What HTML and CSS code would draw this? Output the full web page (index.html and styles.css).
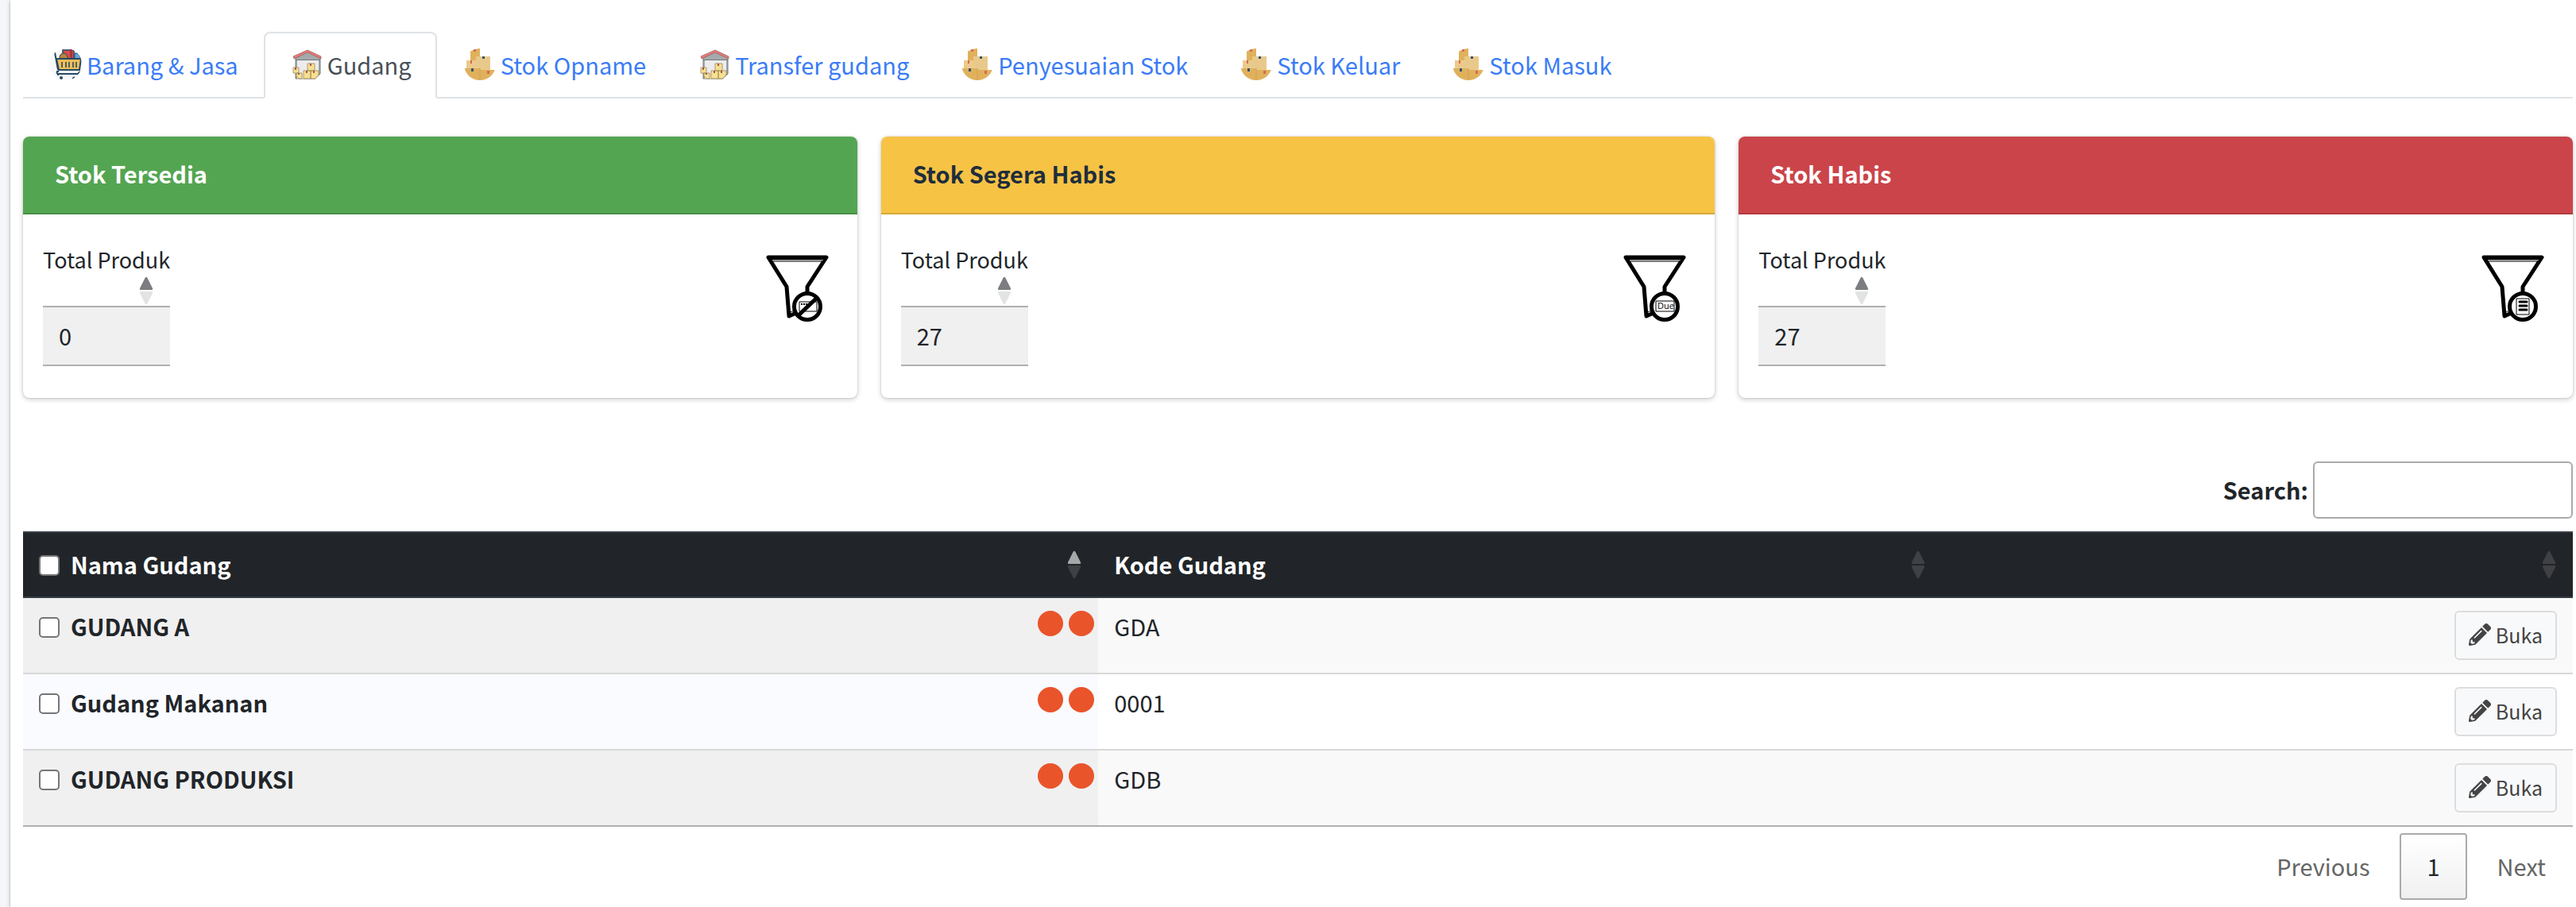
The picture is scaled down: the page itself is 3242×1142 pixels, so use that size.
FILE: index.html
```html
<!DOCTYPE html>
<html lang="id">
<head>
<meta charset="utf-8">
<meta name="viewport" content="width=device-width, initial-scale=1">
<title>Gudang</title>
<link rel="stylesheet" href="styles.css">
</head>
<body>
<svg class="defs" aria-hidden="true">
  <defs>
    <clipPath id="round"><circle cx="20" cy="20" r="20"/></clipPath>
    <symbol id="cart" viewBox="0 0 40 40">
      <g clip-path="url(#round)">
        <rect width="40" height="40" fill="#f8f8f8"/>
        <path d="M16 2h14v13H16z" fill="#dd4b4b" stroke="#244a64" stroke-width="1.5"/>
        <path d="M25 1h3v12h-3z" fill="#a93440"/>
        <path d="M31 6h4l4 7h-8z" fill="#62a8e0" stroke="#244a64"/>
        <circle cx="17" cy="11" r="5" fill="#b9823c" stroke="#244a64"/>
        <path d="M8 13h31l-2 14H11z" fill="#f3bd58" stroke="#244a64" stroke-width="2"/>
        <path d="M15 17v7M20 17v7M24 17v7M29 17v7M33 17v7" stroke="#244a64" stroke-width="1.6"/>
        <path d="M3 5h3l4 22M11 29H9q-1 3 1 3h25l3-3M10 32v2" fill="none" stroke="#244a64" stroke-width="2"/>
        <circle cx="14" cy="37" r="2" fill="#244a64"/>
        <path d="M28 38l3-2" stroke="#244a64" stroke-width="2"/>
      </g>
    </symbol>
    <symbol id="warehouse" viewBox="0 0 40 40">
      <path d="M6 12 21 4l16 8v20l-6 6H6z" fill="#a4aaac" stroke="#777" stroke-width="1"/>
      <path d="M8 15h27v19l-4 4H8z" fill="#ececee"/>
      <path d="M6 14.500h31" stroke="#777"/>
      <path d="M3 10 21 2l17 8v3L21 5 4 13z" fill="#ef7777" stroke="#8d6262" stroke-width=".7"/>
      <g fill="#f7df91" stroke="#a08b55" stroke-width=".8">
        <path d="M21 19h9v9h-9zM16 28h9v10h-9zM25 28h10v5l-4 5h-6zM3 24h7v7H3zM7 31h7v7h-4l-3-3z"/>
      </g>
      <path d="M25 19v3M20 28v3M29 28v3M6 24v3M10 31v2" stroke="#a35a50" stroke-width="2"/>
    </symbol>
    <symbol id="boxes" viewBox="0 0 40 40">
      <g clip-path="url(#round)">
        <path d="M8 0h12v22H8z" fill="#e0b15c"/>
        <path d="M3 15h12v12H3z" fill="#ebca8c"/>
        <path d="M15 10h18v20H15z" fill="#e9c98b"/>
        <path d="M0 25h20v2h20v13H0z" fill="#e0b15c"/>
        <path d="M20 25v15" stroke="#d39e55"/>
        <path d="M12 1h3v3h-3zM8 15h2v4H8zM29 28h3v4h-3z" fill="#d66a55"/>
        <path d="M23 10h3v3h-3zM9 25h3v4H9z" fill="#34566b"/>
      </g>
    </symbol>
    <symbol id="funnel" viewBox="0 0 80 85">
      <path d="M52 48V40L76 3H3L26 40 29 77 38 73" fill="none" stroke="#000" stroke-width="5" stroke-linejoin="round"/>
      <path d="M5 3h69l-2 3H7z" stroke="#000" stroke-width="1"/>
      <path d="M8 6.500h64" stroke="#aaa" stroke-width="1"/>
      <path d="M9 8h62M31 72l4-2" stroke="#000" stroke-width="1"/>
      <circle cx="52" cy="65" r="16.500" fill="#fff" stroke="#000" stroke-width="5"/>
    </symbol>
    <symbol id="pencil" viewBox="0 0 512 512">
      <path fill="currentColor" d="M498 142l-46 46c-5 5-12 5-17 0L324 77c-5-5-5-12 0-17l46-46c19-19 49-19 68 0l60 60c19 19 19 49 0 68zm-214-42L22 362 0 484c-3 16 12 30 28 28l122-22 262-262c5-5 5-12 0-17L301 100c-4-5-12-5-17 0zM124 340c-5-6-5-14 0-20l154-154c6-5 14-5 20 0s5 14 0 20L144 340c-6 5-14 5-20 0zm-36 84h48v36l-64 12-32-31 12-65h36v48z"/>
    </symbol>
    <symbol id="sort" viewBox="0 0 18 36">
      <path class="sort-up" d="M7.500 2q1.500-2.500 3 0L17 15q.5 2-1 2H2q-1.500 0-1-2z"/>
      <path class="sort-down" d="M7.500 34q1.500 2.500 3 0L17 21q.5-2-1-2H2q-1.500 0-1 2z"/>
    </symbol>
  </defs>
</svg>

<main class="panel">
  <nav class="tabs">
    <a class="tab" href="#barang"><svg class="tab-icon"><use href="#cart"/></svg>Barang &amp; Jasa</a>
    <a class="tab active" href="#gudang" aria-current="page"><svg class="tab-icon"><use href="#warehouse"/></svg>Gudang</a>
    <a class="tab" href="#opname"><svg class="tab-icon"><use href="#boxes"/></svg>Stok Opname</a>
    <a class="tab" href="#transfer"><svg class="tab-icon"><use href="#warehouse"/></svg>Transfer gudang</a>
    <a class="tab" href="#penyesuaian"><svg class="tab-icon"><use href="#boxes"/></svg>Penyesuaian Stok</a>
    <a class="tab" href="#keluar"><svg class="tab-icon"><use href="#boxes"/></svg>Stok Keluar</a>
    <a class="tab" href="#masuk"><svg class="tab-icon"><use href="#boxes"/></svg>Stok Masuk</a>
  </nav>

  <section class="cards">
    <article class="card">
      <h2 class="card-header success">Stok Tersedia</h2>
      <div class="card-body">
        <table class="stat">
          <thead><tr><th>Total Produk<svg class="sort asc"><use href="#sort"/></svg></th></tr></thead>
          <tbody><tr><td>0</td></tr></tbody>
        </table>
        <button class="filter" type="button" aria-label="Filter stok tersedia">
          <svg viewBox="0 0 80 85">
            <use href="#funnel"/>
            <path d="M42 59h22v12H42z" fill="#fff" stroke="#000"/>
            <path d="M44 62h10" stroke="#000" stroke-width="2" stroke-dasharray="2 1"/>
            <path d="M41 76 64 54" stroke="#000" stroke-width="5"/>
          </svg>
        </button>
      </div>
    </article>
    <article class="card">
      <h2 class="card-header warning">Stok Segera Habis</h2>
      <div class="card-body">
        <table class="stat">
          <thead><tr><th>Total Produk<svg class="sort asc"><use href="#sort"/></svg></th></tr></thead>
          <tbody><tr><td>27</td></tr></tbody>
        </table>
        <button class="filter" type="button" aria-label="Filter stok segera habis">
          <svg viewBox="0 0 80 85">
            <use href="#funnel"/>
            <path d="M41 58h23v13H41z" fill="#fff" stroke="#000"/>
            <text class="due" x="43" y="68">Due</text>
          </svg>
        </button>
      </div>
    </article>
    <article class="card">
      <h2 class="card-header danger">Stok Habis</h2>
      <div class="card-body">
        <table class="stat">
          <thead><tr><th>Total Produk<svg class="sort asc"><use href="#sort"/></svg></th></tr></thead>
          <tbody><tr><td>27</td></tr></tbody>
        </table>
        <button class="filter" type="button" aria-label="Filter stok habis">
          <svg viewBox="0 0 80 85">
            <use href="#funnel"/>
            <path d="M44 55h16v20H44z" fill="#fff" stroke="#000"/>
            <path d="M48 59h9M48 64h9M48 69h9" stroke="#000" stroke-width="3" stroke-linecap="round"/>
          </svg>
        </button>
      </div>
    </article>
  </section>

  <div class="search">
    <label for="search">Search:</label>
    <input id="search" type="search">
  </div>

  <table class="data">
    <colgroup><col class="col-name"><col class="col-code"><col></colgroup>
    <thead>
      <tr>
        <th><label class="pick"><input type="checkbox">Nama Gudang</label><svg class="sort asc"><use href="#sort"/></svg></th>
        <th>Kode Gudang<svg class="sort"><use href="#sort"/></svg></th>
        <th><svg class="sort"><use href="#sort"/></svg></th>
      </tr>
    </thead>
    <tbody>
      <tr>
        <td><div class="name"><label class="pick"><input type="checkbox">GUDANG A</label><span class="dots"><i></i><i></i></span></div></td>
        <td>GDA</td>
        <td class="action"><button class="open" type="button"><svg><use href="#pencil"/></svg>Buka</button></td>
      </tr>
      <tr>
        <td><div class="name"><label class="pick"><input type="checkbox">Gudang Makanan</label><span class="dots"><i></i><i></i></span></div></td>
        <td>0001</td>
        <td class="action"><button class="open" type="button"><svg><use href="#pencil"/></svg>Buka</button></td>
      </tr>
      <tr>
        <td><div class="name"><label class="pick"><input type="checkbox">GUDANG PRODUKSI</label><span class="dots"><i></i><i></i></span></div></td>
        <td>GDB</td>
        <td class="action"><button class="open" type="button"><svg><use href="#pencil"/></svg>Buka</button></td>
      </tr>
    </tbody>
  </table>

  <nav class="pages" aria-label="Halaman">
    <button type="button">Previous</button>
    <button type="button" class="current" aria-current="page">1</button>
    <button type="button">Next</button>
  </nav>
</main>
</body>
</html>
```
FILE: styles.css
```css
* { box-sizing: border-box; }

body {
  margin: 0;
  padding-left: 13px;
  background: #f4f6f9;
  color: #212529;
  font: 400 29px/46px "Noto Sans CJK SC", "Noto Sans", sans-serif;
}

button, input { font: inherit; color: inherit; }

.defs { position: absolute; width: 0; height: 0; }

.panel {
  min-height: 100vh;
  padding: 40px 4px 6px 16px;
  background: #fff;
  box-shadow: 0 0 2px rgba(0, 0, 0, .25), 0 2px 6px rgba(0, 0, 0, .2);
}

/* Tabs */
.tabs {
  display: flex;
  border-bottom: 2px solid #dee2e6;
}

.tab {
  display: flex;
  align-items: center;
  gap: 6px;
  margin-bottom: -2px;
  padding: 16px 30px 18px 32px;
  border: 2px solid transparent;
  border-radius: 8px 8px 0 0;
  color: #3a7cf6;
  text-decoration: none;
  white-space: nowrap;
}

.tab.active {
  border-color: #dee2e6 #dee2e6 #fff;
  background: #fff;
  color: #495057;
}

.tab-icon { width: 40px; height: 40px; }

/* Stock cards */
.cards {
  display: grid;
  grid-template-columns: repeat(3, 1fr);
  gap: 30px;
  margin-top: 48px;
}

.card {
  overflow: hidden;
  border-radius: 8px;
  box-shadow: 0 0 2px rgba(0, 0, 0, .2), 0 2px 6px rgba(0, 0, 0, .2);
}

.card-header {
  margin: 0;
  padding: 23px 40px 27px;
  border-bottom: 2px solid rgba(0, 0, 0, .125);
  font-size: 29px;
  font-weight: 700;
}

.success { background: #54a551; color: #fff; }
.warning { background: #f6c344; color: #1f2d3d; }
.danger { background: #cb444a; color: #fff; }

.card-body {
  display: flex;
  justify-content: space-between;
  align-items: flex-start;
  padding: 34px 35px 40px 25px;
}

.stat { border-collapse: collapse; }

.stat th {
  position: relative;
  padding: 0 0 35px;
  border-bottom: 2px solid #b0b0b0;
  font-size: 27px;
  font-weight: 400;
  text-align: left;
}

.stat td {
  padding: 12px 20px 14px;
  border-bottom: 2px solid #b0b0b0;
  background: #f0f0f0;
}

.filter {
  margin-top: 17px;
  padding: 0;
  border: 0;
  background: none;
}

.filter svg { display: block; width: 80px; height: 85px; overflow: visible; }
.due { font: 11px "Open Sans", sans-serif; }

/* Sort arrows sit over the right end of a heading cell */
.sort {
  position: absolute;
  right: 21px;
  width: 18px;
  height: 36px;
  --up: #404144;
  --down: #404144;
}

.sort-up { fill: var(--up); }
.sort-down { fill: var(--down); }
.data .sort { top: 22px; }
.data .sort.asc { --up: #a7a8a9; }
.stat .sort { bottom: 1px; --up: #7c7d80; --down: #e2e4e3; }

/* Search */
.search {
  display: flex;
  justify-content: flex-end;
  align-items: center;
  gap: 6px;
  margin: 80px 0 16px;
  font-weight: 700;
}

.search label { padding-bottom: 2px; }

.search input {
  width: 327px;
  height: 72px;
  padding: 10px;
  border: 2px solid #aaa;
  border-radius: 6px;
  background: #fff;
}

/* Warehouse table */
.data {
  width: 100%;
  table-layout: fixed;
  border-collapse: separate;
  border-spacing: 0;
  border-bottom: 2px solid #b0b0b0;
}

.col-name { width: 42.17%; }
.col-code { width: 33.1%; }

.data th {
  position: relative;
  padding: 16px 20px 18px;
  border: solid #373d44;
  border-width: 2px 0;
  background: #212529;
  color: #fff;
  font-weight: 700;
  text-align: left;
}

.data td {
  padding: 12px 20px 0;
  border-bottom: 2px solid #d8d8d8;
  vertical-align: top;
}

.data tbody tr:last-child td { border-bottom: 0; }
.data tbody tr:nth-child(odd) { background: #f9f9f9; }
.data tbody tr:nth-child(odd) td:first-child { background: #f0f0f0; }
.data tbody tr:nth-child(even) td:first-child { background: #fafbff; }
.data tbody td:first-child { padding-right: 5px; font-weight: 700; }

.pick { display: inline-flex; align-items: center; gap: 14px; vertical-align: top; }

.pick input {
  appearance: none;
  width: 26px;
  height: 26px;
  margin: 4px 0 0;
  border: 2px solid #767676;
  border-radius: 5px;
  background: #fff;
}

.name { display: flex; justify-content: space-between; align-items: flex-start; }
.dots { display: flex; gap: 7px; padding-top: 4px; }
.dots i { width: 32px; height: 32px; border-radius: 50%; background: #e9542b; }

.data .action { padding: 16px 20px; text-align: right; }

.open {
  display: inline-flex;
  align-items: center;
  gap: 6px;
  height: 62px;
  padding: 0 16px 2px;
  border: 2px solid #ddd;
  border-radius: 6px;
  background: #f8f9fa;
  color: #444;
  font-size: 25px;
  vertical-align: top;
}

.open svg { width: 28px; height: 28px; }

/* Pagination */
.pages {
  display: flex;
  justify-content: flex-end;
  gap: 4px;
  margin-top: 8px;
}

.pages button {
  padding: 16px 32px 18px;
  border: 2px solid transparent;
  border-radius: 4px;
  background: none;
  color: #666;
}

.pages .current {
  border-color: #aaa;
  background: linear-gradient(#fff, #f0f0f0);
  color: #212529;
}
```
